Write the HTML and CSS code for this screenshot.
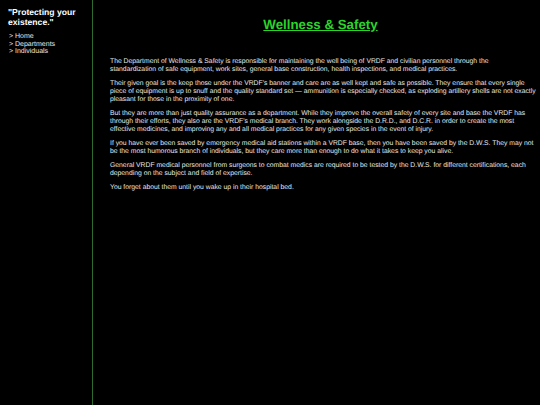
FILE: index.html
```html
<!DOCTYPE html>
<html>
<head>
  <title>Wellness &amp; Safety</title>
  <link rel="stylesheet" href="styles.css">
</head>
<body>
  <div class="page">
    <div class="sidebar">
      <div class="motto">"Protecting your existence."</div>
      <ul class="nav">
        <li><a href="#">&gt; Home</a></li>
        <li><a href="#">&gt; Departments</a></li>
        <li><a href="#">&gt; Individuals</a></li>
      </ul>
    </div>
    <div class="main">
      <h1 class="title">Wellness &amp; Safety</h1>
      <div class="text">
        <p>The Department of Wellness &amp; Safety is responsible for maintaining the well being of VRDF and civilian personnel through the standardization of safe equipment, work sites, general base construction, health inspections, and medical practices.</p>
        <p>Their given goal is the keep those under the VRDF's banner and care are as well kept and safe as possible. They ensure that every single piece of equipment is up to snuff and the quality standard set &mdash; ammunition is especially checked, as exploding artillery shells are not exactly pleasant for those in the proximity of one.</p>
        <p>But they are more than just quality assurance as a department. While they improve the overall safety of every site and base the VRDF has through their efforts, they also are the VRDF's medical branch. They work alongside the D.R.D., and D.C.R. in order to create the most effective medicines, and improving any and all medical practices for any given species in the event of injury.</p>
        <p>If you have ever been saved by emergency medical aid stations within a VRDF base, then you have been saved by the D.W.S. They may not be the most humorous branch of individuals, but they care more than enough to do what it takes to keep you alive.</p>
        <p>General VRDF medical personnel from surgeons to combat medics are required to be tested by the D.W.S. for different certifications, each depending on the subject and field of expertise.</p>
        <p>You forget about them until you wake up in their hospital bed.</p>
      </div>
    </div>
  </div>
</body>
</html>
```

FILE: styles.css
```css
* {
  margin: 0;
  padding: 0;
  box-sizing: border-box;
}

html, body {
  width: 100%;
  height: 100%;
  background: #000;
  overflow: hidden;
}

body {
  font-family: 'Liberation Sans', Arial, sans-serif;
  color: #e8e8e8;
  text-rendering: geometricPrecision;
}

.page {
  display: flex;
  height: 100%;
}

.sidebar {
  flex: 0 0 93px;
  border-right: 1px solid #2f6b2f;
  padding: 8px 6px 0 8px;
}

.motto {
  font-size: 8.6px;
  font-weight: bold;
  line-height: 9.5px;
  color: #fff;
}

.nav {
  list-style: none;
  margin-top: 6px;
  margin-left: 1px;
}

.nav li {
  font-size: 7px;
  line-height: 7.6px;
}

.nav a {
  color: #e8e8e8;
  text-decoration: none;
}

.main {
  flex: 1;
  padding: 17px 4px 0 17px;
}

.title {
  font-size: 13.3px;
  font-weight: bold;
  color: #2bd42b;
  text-decoration: underline;
  text-align: center;
  line-height: 16px;
  padding-right: 5px;
}

.text {
  margin-top: 25px;
  font-size: 6.8px;
  line-height: 8px;
}

.text p {
  margin-bottom: 6px;
}
```
